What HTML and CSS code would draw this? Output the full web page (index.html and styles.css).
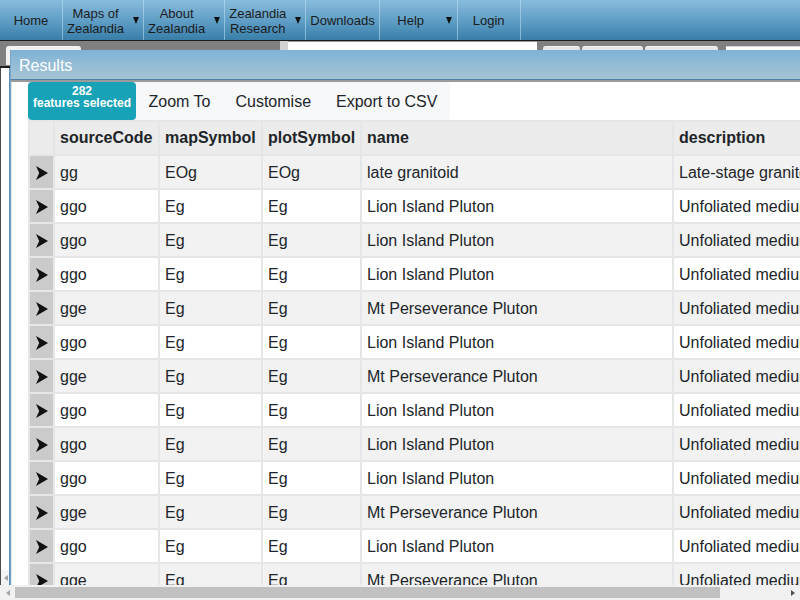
FILE: index.html
```html
<!DOCTYPE html>
<html lang="en">
<head>
<meta charset="utf-8">
<title>Zealandia – Results</title>
<link rel="stylesheet" href="styles.css">
</head>
<body>
<div class="page">
  <nav class="topnav">
    <a class="nav-item"><span class="nav-label">Home</span></a>
    <a class="nav-item"><span class="nav-label">Maps of<br>Zealandia</span><span class="caret"></span></a>
    <a class="nav-item"><span class="nav-label">About<br>Zealandia</span><span class="caret"></span></a>
    <a class="nav-item"><span class="nav-label">Zealandia<br>Research</span><span class="caret"></span></a>
    <a class="nav-item"><span class="nav-label">Downloads</span></a>
    <a class="nav-item"><span class="nav-label">Help</span><span class="caret"></span></a>
    <a class="nav-item"><span class="nav-label">Login</span></a>
  </nav>

  <div class="workspace">
    <div class="strip">
      <span class="strip-tab first"></span>
      <span class="strip-grip"></span>
      <span class="strip-input"></span>
      <span class="strip-tab t1"></span>
      <span class="strip-tab t2"></span>
      <span class="strip-tab t3"></span>
      <span class="strip-field"></span>
    </div>
    <div class="canvas">
      <div class="sidepanel">
        <div class="side-fill"></div>
        <div class="side-scroll"><span class="tri-left light"></span></div>
      </div>
    </div>

    <section class="dialog">
      <header class="dialog-title">Results</header>
      <div class="dialog-body">
        <div class="toolbar">
          <span class="badge">282<br>features selected</span>
          <span class="tool-btn">Zoom To</span>
          <span class="tool-btn">Customise</span>
          <span class="tool-btn">Export to CSV</span>
        </div>
        <table class="results">
          <thead>
            <tr>
              <th class="c-sel"></th>
              <th class="c-src">sourceCode</th>
              <th class="c-map">mapSymbol</th>
              <th class="c-plot">plotSymbol</th>
              <th class="c-name">name</th>
              <th class="c-desc">description</th>
            </tr>
          </thead>
          <tbody>
            <tr><td class="sel"><svg class="go" viewBox="0 0 12 14"><polygon points="0,0 12,7 0,14 3.2,7"/></svg></td><td>gg</td><td>EOg</td><td>EOg</td><td>late granitoid</td><td>Late-stage granitoid dykes and small plutons</td></tr>
            <tr><td class="sel"><svg class="go" viewBox="0 0 12 14"><polygon points="0,0 12,7 0,14 3.2,7"/></svg></td><td>ggo</td><td>Eg</td><td>Eg</td><td>Lion Island Pluton</td><td>Unfoliated medium-grained biotite granite</td></tr>
            <tr><td class="sel"><svg class="go" viewBox="0 0 12 14"><polygon points="0,0 12,7 0,14 3.2,7"/></svg></td><td>ggo</td><td>Eg</td><td>Eg</td><td>Lion Island Pluton</td><td>Unfoliated medium-grained biotite granite</td></tr>
            <tr><td class="sel"><svg class="go" viewBox="0 0 12 14"><polygon points="0,0 12,7 0,14 3.2,7"/></svg></td><td>ggo</td><td>Eg</td><td>Eg</td><td>Lion Island Pluton</td><td>Unfoliated medium-grained biotite granite</td></tr>
            <tr><td class="sel"><svg class="go" viewBox="0 0 12 14"><polygon points="0,0 12,7 0,14 3.2,7"/></svg></td><td>gge</td><td>Eg</td><td>Eg</td><td>Mt Perseverance Pluton</td><td>Unfoliated medium-grained biotite granite</td></tr>
            <tr><td class="sel"><svg class="go" viewBox="0 0 12 14"><polygon points="0,0 12,7 0,14 3.2,7"/></svg></td><td>ggo</td><td>Eg</td><td>Eg</td><td>Lion Island Pluton</td><td>Unfoliated medium-grained biotite granite</td></tr>
            <tr><td class="sel"><svg class="go" viewBox="0 0 12 14"><polygon points="0,0 12,7 0,14 3.2,7"/></svg></td><td>gge</td><td>Eg</td><td>Eg</td><td>Mt Perseverance Pluton</td><td>Unfoliated medium-grained biotite granite</td></tr>
            <tr><td class="sel"><svg class="go" viewBox="0 0 12 14"><polygon points="0,0 12,7 0,14 3.2,7"/></svg></td><td>ggo</td><td>Eg</td><td>Eg</td><td>Lion Island Pluton</td><td>Unfoliated medium-grained biotite granite</td></tr>
            <tr><td class="sel"><svg class="go" viewBox="0 0 12 14"><polygon points="0,0 12,7 0,14 3.2,7"/></svg></td><td>ggo</td><td>Eg</td><td>Eg</td><td>Lion Island Pluton</td><td>Unfoliated medium-grained biotite granite</td></tr>
            <tr><td class="sel"><svg class="go" viewBox="0 0 12 14"><polygon points="0,0 12,7 0,14 3.2,7"/></svg></td><td>ggo</td><td>Eg</td><td>Eg</td><td>Lion Island Pluton</td><td>Unfoliated medium-grained biotite granite</td></tr>
            <tr><td class="sel"><svg class="go" viewBox="0 0 12 14"><polygon points="0,0 12,7 0,14 3.2,7"/></svg></td><td>gge</td><td>Eg</td><td>Eg</td><td>Mt Perseverance Pluton</td><td>Unfoliated medium-grained biotite granite</td></tr>
            <tr><td class="sel"><svg class="go" viewBox="0 0 12 14"><polygon points="0,0 12,7 0,14 3.2,7"/></svg></td><td>ggo</td><td>Eg</td><td>Eg</td><td>Lion Island Pluton</td><td>Unfoliated medium-grained biotite granite</td></tr>
            <tr><td class="sel"><svg class="go" viewBox="0 0 12 14"><polygon points="0,0 12,7 0,14 3.2,7"/></svg></td><td>gge</td><td>Eg</td><td>Eg</td><td>Mt Perseverance Pluton</td><td>Unfoliated medium-grained biotite granite</td></tr>
          </tbody>
        </table>
      </div>
    </section>
  </div>

  <div class="hscroll">
    <span class="sb-btn"><span class="tri-left light"></span></span>
    <span class="sb-thumb"></span>
    <span class="sb-track"></span>
    <span class="sb-btn"><span class="tri-right"></span></span>
  </div>
</div>
</body>
</html>
```

FILE: styles.css
```css
html, body {
  margin: 0;
  padding: 0;
  overflow: hidden;
}

body {
  font-family: "Liberation Sans", Arial, sans-serif;
  color: #212529;
  background: #ffffff;
}

.page {
  width: 800px;
  height: 600px;
  display: flex;
  flex-direction: column;
  overflow: hidden;
}

/* ---------- top navigation ---------- */
.topnav {
  height: 40px;
  flex-shrink: 0;
  display: flex;
  background: linear-gradient(to bottom, #89bcdc 0%, #5d9cc4 55%, #387ea9 100%);
}

.nav-item {
  display: flex;
  align-items: center;
  padding-top: 1px;
  box-sizing: border-box;
  border-right: 1px solid rgba(190, 225, 245, 0.55);
  color: #1b1b1b;
  font-size: 13px;
  line-height: 15px;
  cursor: pointer;
}

.nav-label {
  min-width: 62px;
  padding: 0 4px;
  box-sizing: border-box;
  text-align: center;
}

.caret {
  width: 15px;
  display: flex;
  justify-content: center;
}

.caret::before {
  content: "";
  width: 0;
  height: 0;
  border-left: 3.5px solid transparent;
  border-right: 3.5px solid transparent;
  border-top: 7px solid #111111;
}

/* ---------- workspace behind the dialog ---------- */
.workspace {
  flex: 1;
  position: relative;
  overflow: hidden;
  border-top: 1px solid #1c1c1c;
  display: flex;
  flex-direction: column;
}

.strip {
  height: 25px;
  flex-shrink: 0;
  display: flex;
  background: #808080;
  border-bottom: 2px solid #1e1e1e;
}

.strip-tab {
  margin-top: 5px;
  height: 18px;
  background: #e6e6e6;
  border-top: 1px solid #f4f4f4;
  border-radius: 3px 3px 0 0;
}

.strip-tab.first {
  margin-left: 6px;
  width: 75px;
  background: #f2f2f2;
}

.strip-grip {
  margin-left: 199px;
  width: 8px;
  background: #d2d2d2;
}

.strip-input {
  width: 249px;
  background: #ffffff;
  border-top: 1px solid #9a9a9a;
  margin-right: 6px;
}

.strip-tab.t1 { width: 37px; margin-right: 2px; }
.strip-tab.t2 { width: 61px; margin-right: 2px; }
.strip-tab.t3 { width: 73px; margin-right: 8px; }

.strip-field {
  flex: 1;
  margin-top: 5px;
  background: #ffffff;
  border-top: 1px solid #cfd8e0;
}

.canvas {
  flex: 1;
  display: flex;
  background: #ffffff;
}

.sidepanel {
  width: 8px;
  border-left: 1px solid #4a4a4a;
  border-right: 1px solid #5b8fbb;
  display: flex;
  flex-direction: column;
}

.side-fill { flex: 1; }

.side-scroll {
  height: 15px;
  display: flex;
  align-items: center;
  justify-content: flex-end;
  padding-right: 1px;
  background: #f4f4f4;
}

/* ---------- Results dialog ---------- */
.dialog {
  position: absolute;
  left: 10px;
  top: 9px;
  bottom: -40px;
  width: 1300px;
  background: #ffffff;
  border-left: 1px solid #7aa3c4;
  box-shadow: inset 1px 0 0 #dbe6ee;
}

.dialog-title {
  height: 27px;
  padding: 2px 0 0 8px;
  line-height: 27px;
  font-size: 16px;
  color: #ffffff;
  background: linear-gradient(to bottom, #7fb3d6 0%, #93bcd6 50%, #a5c3d3 100%);
  border-bottom: 1px solid #4d7fa8;
}

.dialog-body {
  border-top: 2px solid #9b9b9b;
  padding-left: 17px;
}

.toolbar {
  display: flex;
  width: fit-content;
  height: 38px;
  background: #f7f8f9;
  border-radius: 4px;
}

.badge {
  width: 108px;
  box-sizing: border-box;
  padding: 3px 4px 0;
  background: #17a2b8;
  color: #ffffff;
  font-size: 12px;
  font-weight: bold;
  line-height: 12px;
  text-align: center;
  border-radius: 4px;
}

.tool-btn {
  padding: 2px 12.5px 0;
  line-height: 36px;
  font-size: 16px;
  color: #212529;
}

.tool-btn:first-of-type {
  padding-left: 14px;
}

/* ---------- table ---------- */
.results {
  table-layout: fixed;
  width: 1248px;
  border-collapse: separate;
  border-spacing: 2px;
  background: #e4e6e8;
  font-size: 16px;
  color: #212529;
}

.results th,
.results td {
  box-sizing: border-box;
  height: 32px;
  padding: 0 5px;
  text-align: left;
  white-space: nowrap;
  overflow: hidden;
  vertical-align: middle;
}

.results td {
  padding-top: 2px;
}

.results th {
  background: #ececec;
  font-weight: bold;
}

.results tbody tr:nth-child(odd) td { background: #f2f2f2; }
.results tbody tr:nth-child(even) td { background: #ffffff; }

.results tbody tr td.sel {
  background: #cbcbcb;
  padding: 1px 0 0 1px;
  text-align: center;
  line-height: 0;
}

.go {
  width: 12px;
  height: 14px;
  fill: #111111;
  vertical-align: middle;
}

.c-sel { width: 23px; }
.c-src { width: 103px; }
.c-map { width: 101px; }
.c-plot { width: 97px; }
.c-name { width: 310px; }
.c-desc { width: 600px; }

/* ---------- page scrollbar ---------- */
.hscroll {
  height: 15px;
  flex-shrink: 0;
  display: flex;
  background: #f1f1f1;
}

.sb-btn {
  width: 15px;
  display: flex;
  align-items: center;
  justify-content: center;
}

.sb-thumb {
  width: 705px;
  margin: 2px 0;
  background: #c1c1c1;
}

.sb-track { flex: 1; }

.tri-left {
  width: 0;
  height: 0;
  border-top: 3.5px solid transparent;
  border-bottom: 3.5px solid transparent;
  border-right: 4px solid #505050;
}

.tri-left.light { border-right-color: #a3a3a3; }

.tri-right {
  width: 0;
  height: 0;
  border-top: 3.5px solid transparent;
  border-bottom: 3.5px solid transparent;
  border-left: 4px solid #505050;
}
```
